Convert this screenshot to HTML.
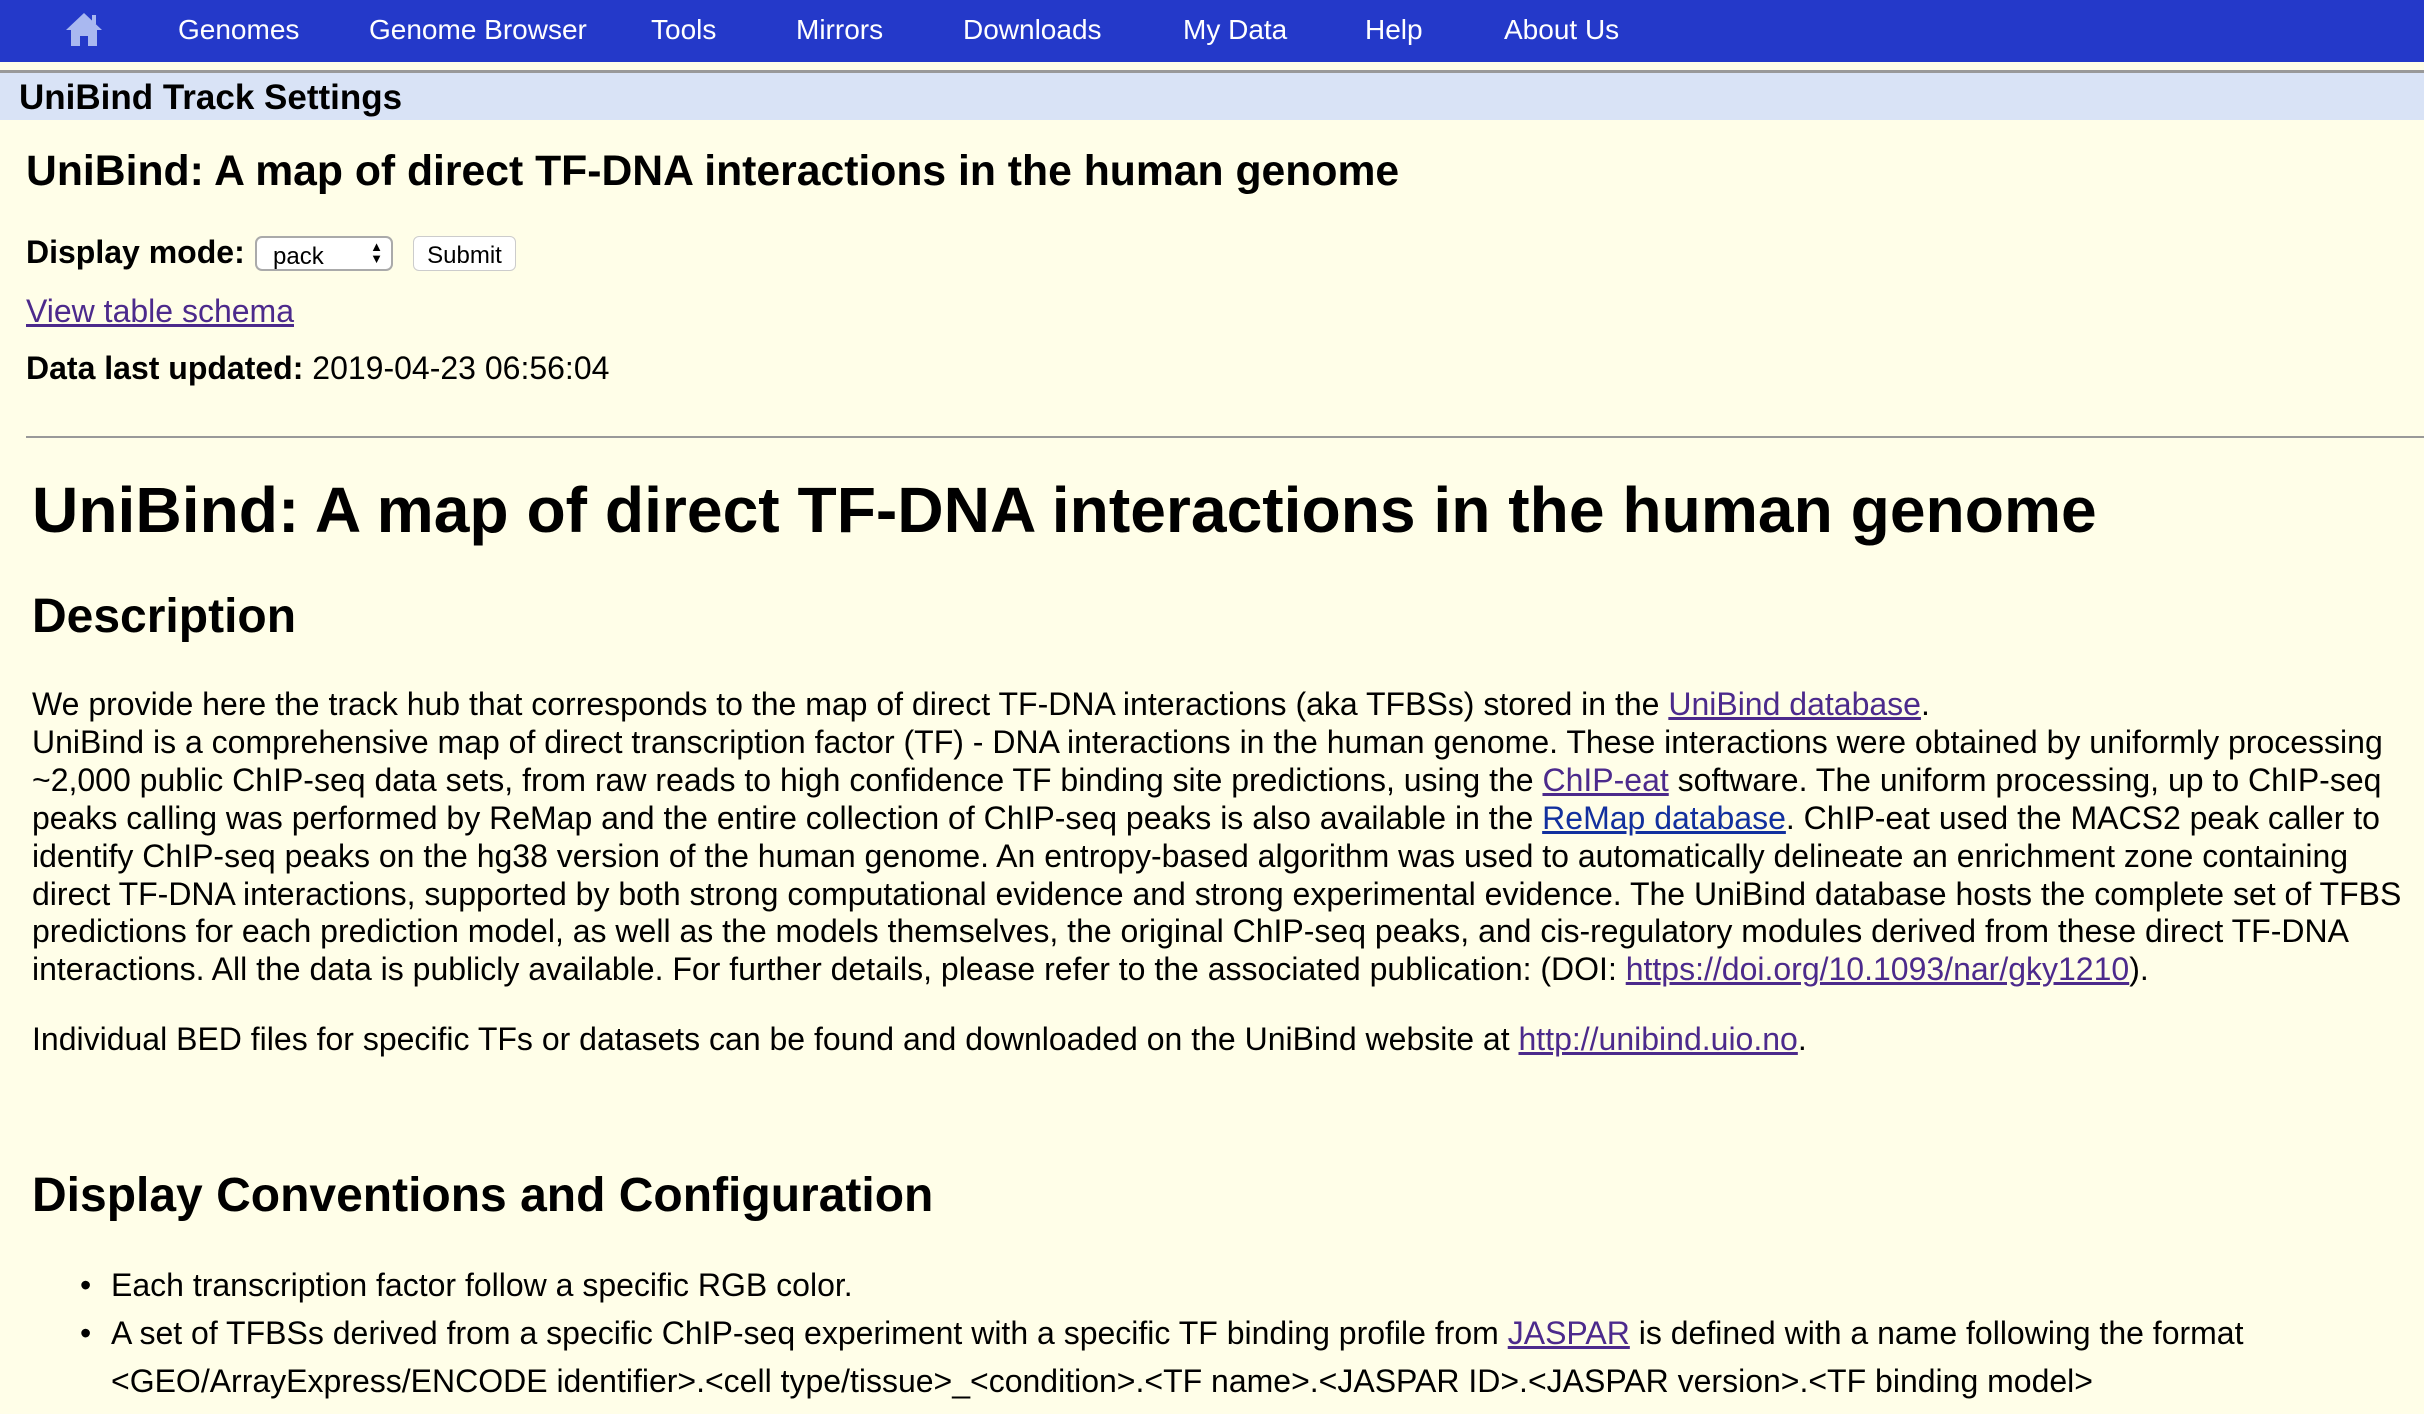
<!DOCTYPE html>
<html><head><meta charset="utf-8"><style>
*{margin:0;padding:0;box-sizing:border-box}
body{width:2424px;height:1414px;overflow:hidden;background:#fffee8;font-family:"Liberation Sans",Arial,sans-serif;color:#000;position:relative}
.a{position:absolute;white-space:nowrap;line-height:1}
#nav{position:absolute;left:0;top:0;width:2424px;height:62px;background:#2439c9}
#nav span{position:absolute;top:16px;color:#fff;font-size:28px;line-height:1}
#sep{position:absolute;top:70px;left:0;width:2424px;height:3px;background:#999}
#band{position:absolute;top:73px;left:0;width:2424px;height:47px;background:#d9e3f6}
a{color:#4c2a8c;text-decoration:underline}
a.b{color:#12309e}
.p{position:absolute;left:32px;font-size:32px;line-height:37.9px;white-space:nowrap}
</style></head><body>
<div id="nav">
<svg style="position:absolute;left:64px;top:10px" width="40" height="38" viewBox="0 0 40 38"><path d="M20 3 L2 20 L7 20 L7 36 L16 36 L16 26 L24 26 L24 36 L33 36 L33 20 L38 20 Z" fill="#a9b8f0"/><rect x="28" y="5" width="4" height="9" fill="#a9b8f0"/></svg>
<span style="left:178px">Genomes</span>
<span style="left:369px">Genome Browser</span>
<span style="left:651px">Tools</span>
<span style="left:796px">Mirrors</span>
<span style="left:963px">Downloads</span>
<span style="left:1183px">My Data</span>
<span style="left:1365px">Help</span>
<span style="left:1504px">About Us</span>
</div>
<div id="sep"></div>
<div id="band"><div class="a" style="left:19px;top:7px;font-size:35px;font-weight:bold">UniBind Track Settings</div></div>
<div class="a" style="left:26px;top:150px;font-size:42.7px;font-weight:bold">UniBind: A map of direct TF-DNA interactions in the human genome</div>
<div class="a" style="left:26px;top:236px;font-size:32px;font-weight:bold">Display mode:</div>
<div style="position:absolute;left:255px;top:236px;width:138px;height:35px;border:2px solid #aaa;border-radius:7px;background:#fff;font-size:24px;padding:5px 0 0 16px">pack<span style="position:absolute;right:8px;top:3px;font-size:13px;line-height:12px">▲<br>▼</span></div>
<div style="position:absolute;left:413px;top:236px;width:103px;height:35px;border:1px solid #ccc;border-radius:6px;background:#fff;font-size:24px;text-align:center;padding-top:5px">Submit</div>
<div class="a" style="left:26px;top:295px;font-size:32px"><a href="#">View table schema</a></div>
<div class="a" style="left:26px;top:352px;font-size:32px"><b>Data last updated:</b> 2019-04-23 06:56:04</div>
<div style="position:absolute;left:26px;top:436px;width:2398px;height:2px;background:#999"></div>
<div class="a" style="left:32px;top:478px;font-size:64.2px;font-weight:bold">UniBind: A map of direct TF-DNA interactions in the human genome</div>
<div class="a" style="left:32px;top:593px;font-size:48px;font-weight:bold">Description</div>
<div class="p" style="top:686px">We provide here the track hub that corresponds to the map of direct TF-DNA interactions (aka TFBSs) stored in the <a href="#">UniBind database</a>.<br>
UniBind is a comprehensive map of direct transcription factor (TF) - DNA interactions in the human genome. These interactions were obtained by uniformly processing<br>
~2,000 public ChIP-seq data sets, from raw reads to high confidence TF binding site predictions, using the <a href="#">ChIP-eat</a> software. The uniform processing, up to ChIP-seq<br>
peaks calling was performed by ReMap and the entire collection of ChIP-seq peaks is also available in the <a class="b" href="#">ReMap database</a>. ChIP-eat used the MACS2 peak caller to<br>
identify ChIP-seq peaks on the hg38 version of the human genome. An entropy-based algorithm was used to automatically delineate an enrichment zone containing<br>
direct TF-DNA interactions, supported by both strong computational evidence and strong experimental evidence. The UniBind database hosts the complete set of TFBS<br>
predictions for each prediction model, as well as the models themselves, the original ChIP-seq peaks, and cis-regulatory modules derived from these direct TF-DNA<br>
interactions. All the data is publicly available. For further details, please refer to the associated publication: (DOI: <a href="#">https://doi.org/10.1093/nar/gky1210</a>).</div>
<div class="p" style="top:1021px">Individual BED files for specific TFs or datasets can be found and downloaded on the UniBind website at <a href="#">http://unibind.uio.no</a>.</div>
<div class="a" style="left:32px;top:1172px;font-size:48px;font-weight:bold">Display Conventions and Configuration</div>
<div class="p" style="top:1267px;left:80px">•</div>
<div class="p" style="top:1315px;left:80px">•</div>
<div class="p" style="top:1267px;left:111px">Each transcription factor follow a specific RGB color.<br>
<span style="display:block;height:10px"></span>A set of TFBSs derived from a specific ChIP-seq experiment with a specific TF binding profile from <a href="#">JASPAR</a> is defined with a name following the format<br>
<span style="display:block;height:10px"></span>&lt;GEO/ArrayExpress/ENCODE identifier&gt;.&lt;cell type/tissue&gt;_&lt;condition&gt;.&lt;TF name&gt;.&lt;JASPAR ID&gt;.&lt;JASPAR version&gt;.&lt;TF binding model&gt;</div>
</body></html>
